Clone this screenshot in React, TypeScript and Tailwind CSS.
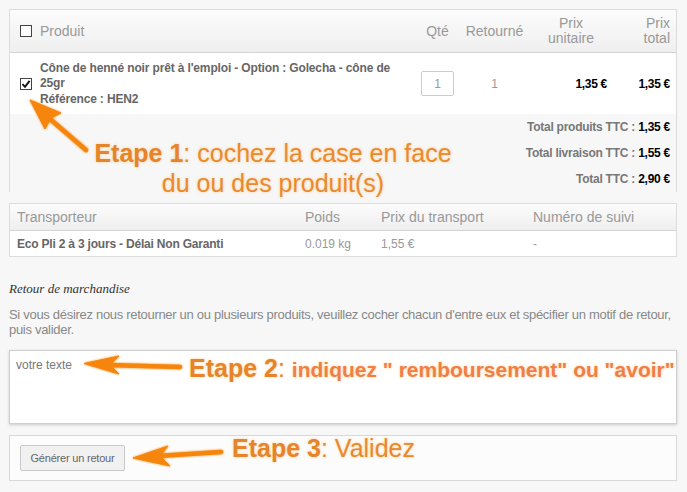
import React from "react";

function Box({ checked }: { checked?: boolean }) {
  return (
    <span className="relative flex h-[12px] w-[12px] items-center justify-center border border-[#444] bg-white">
      {checked && (
        <svg width="10" height="10" viewBox="0 0 10 10" className="absolute">
          <path d="M1.5 5.2 L4 7.8 L8.6 1.8" fill="none" stroke="#111" strokeWidth="1.9" />
        </svg>
      )}
    </span>
  );
}

export default function App() {
  return (
    <div className="relative h-[492px] w-[687px] overflow-hidden bg-[#f7f7f7] pl-[9px] pr-[10px] pt-[9px] font-['Liberation_Sans',Arial,sans-serif]">
      {/* Table 1 */}
      <div className="border-x border-t border-[#dcdcdc]">
        <div className="grid h-[43px] grid-cols-[30px_376px_43px_71px_82px_1fr] items-center border-b border-[#d4d4d4] bg-gradient-to-b from-[#fcfcfc] to-[#efefef] text-[14px] text-[#999]">
          <div className="flex justify-center pl-[2px]"><Box /></div>
          <div>Produit</div>
          <div className="text-center">Qté</div>
          <div className="text-center">Retourné</div>
          <div className="text-center leading-[15px]">Prix<br />unitaire</div>
          <div className="pr-[6px] text-right leading-[15px]">Prix<br />total</div>
        </div>
        <div className="grid h-[61px] grid-cols-[30px_376px_43px_71px_82px_1fr] bg-white">
          <div className="flex items-center justify-center pl-[2px] pt-[1px]"><Box checked /></div>
          <div className="pt-[8px] text-[12px] font-bold leading-[15px] tracking-[-0.15px] text-[#666]">
            <div className="pr-[10px]">Cône de henné noir prêt à l'emploi - Option : Golecha - cône de 25gr</div>
            <div className="mt-[1px]">Référence : HEN2</div>
          </div>
          <div className="flex items-center justify-center">
            <div className="flex h-[25px] w-[33px] items-center justify-center rounded-[2px] border border-[#ccc] bg-white text-[12px] text-[#999]">1</div>
          </div>
          <div className="flex items-center justify-center text-[12px] text-[#999]">1</div>
          <div className="flex items-center justify-end pr-[5px] text-[12px] font-bold tracking-[-0.3px] text-black">1,35 €</div>
          <div className="flex items-center justify-end pr-[6px] text-[12px] font-bold tracking-[-0.3px] text-black">1,35 €</div>
        </div>
        <div className="flex h-[78px] flex-col items-end justify-center gap-[11px] pr-[6px] text-[12px] font-bold leading-[15px] tracking-[-0.25px] text-[#777]">
          <div>Total produits TTC : <span className="text-black">1,35 €</span></div>
          <div>Total livraison TTC : <span className="text-black">1,55 €</span></div>
          <div>Total TTC : <span className="text-black">2,90 €</span></div>
        </div>
      </div>

      {/* Table 2 */}
      <div className="mt-[11px] border border-[#dcdcdc]">
        <div className="grid h-[27px] grid-cols-[288px_76px_152px_1fr] items-center border-b border-[#d4d4d4] bg-gradient-to-b from-[#fcfcfc] to-[#efefef] pl-[7px] text-[14px] text-[#999]">
          <div>Transporteur</div>
          <div>Poids</div>
          <div>Prix du transport</div>
          <div>Numéro de suivi</div>
        </div>
        <div className="grid h-[25px] grid-cols-[288px_76px_152px_1fr] items-center bg-white pl-[7px] text-[12px] text-[#999]">
          <div className="font-bold tracking-[-0.2px] text-[#666]">Eco Pli 2 à 3 jours - Délai Non Garanti</div>
          <div>0.019 kg</div>
          <div>1,55 €</div>
          <div>-</div>
        </div>
      </div>

      {/* Retour */}
      <div className="mt-[25px] font-['Liberation_Serif',serif] text-[13px] italic leading-[14px] text-[#333]">Retour de marchandise</div>
      <p className="mt-[11px] pr-[4px] text-[13px] leading-[15px] tracking-[-0.3px] text-[#888]">
        Si vous désirez nous retourner un ou plusieurs produits, veuillez cocher chacun d'entre eux et spécifier un motif de retour, puis valider.
      </p>
      <div className="mt-[13px] h-[74px] border border-[#cfcfcf] bg-white px-[6px] pt-[5px] text-[12px] text-[#777] shadow-[0_1px_3px_rgba(0,0,0,0.18)]">
        votre texte
      </div>
      <div className="mt-[11px] flex h-[46px] items-center border border-[#d8d8d8] bg-[#fcfcfc] pl-[10px]">
        <button className="h-[26px] w-[105px] rounded-[2px] border border-[#c8c8c8] bg-[#f1f1f1] text-[11px] tracking-[-0.2px] text-[#666]">
          Générer un retour
        </button>
      </div>

      {/* Annotations */}
      <div className="pointer-events-none absolute left-[73px] top-[138px] w-[400px] text-center text-[25px] leading-[30px] text-[#ea8a2e] [text-shadow:0_0_3px_rgba(255,190,110,0.7)]">
        <div className="whitespace-nowrap"><span className="font-bold text-[#e5842a]">Etape 1</span>: cochez la case en face</div>
        <div>du ou des produit(s)</div>
      </div>
      <div className="pointer-events-none absolute left-[189px] top-[353px] whitespace-nowrap text-[25px] leading-[30px] text-[#e5842a] [text-shadow:0_0_3px_rgba(255,190,110,0.7)]">
        <span className="font-bold">Etape 2</span>: <span className="text-[21px] font-bold text-[#f07f47]">indiquez " remboursement" ou "avoir"</span>
      </div>
      <div className="pointer-events-none absolute left-[232px] top-[433px] whitespace-nowrap text-[25px] leading-[30px] text-[#e8892e] [text-shadow:0_0_3px_rgba(255,190,110,0.7)]">
        <span className="font-bold text-[#e5842a]">Etape 3</span>: Validez
      </div>
      <svg className="pointer-events-none absolute left-0 top-0" width="687" height="492" viewBox="0 0 687 492">
        <defs>
          <filter id="glow" x="-20%" y="-20%" width="140%" height="140%">
            <feGaussianBlur stdDeviation="1.2" result="b" />
            <feMerge>
              <feMergeNode in="b" />
              <feMergeNode in="SourceGraphic" />
            </feMerge>
          </filter>
        </defs>
        <g fill="#f5850f" stroke="#f5850f" filter="url(#glow)">
          <line x1="50" y1="119" x2="86" y2="150" strokeWidth="4.5" strokeLinecap="round" />
          <polygon points="30,100 61,113 51,118 45,129" strokeWidth="1" strokeLinejoin="round" />
          <line x1="108" y1="365" x2="180" y2="367" strokeWidth="4.5" strokeLinecap="round" />
          <polygon points="84,363.5 119,356 110,365 119,374" strokeWidth="1" strokeLinejoin="round" />
          <line x1="158" y1="456" x2="221" y2="452" strokeWidth="4.5" strokeLinecap="round" />
          <polygon points="133,458 168,446 160,456 170,466" strokeWidth="1" strokeLinejoin="round" />
        </g>
      </svg>
    </div>
  );
}
